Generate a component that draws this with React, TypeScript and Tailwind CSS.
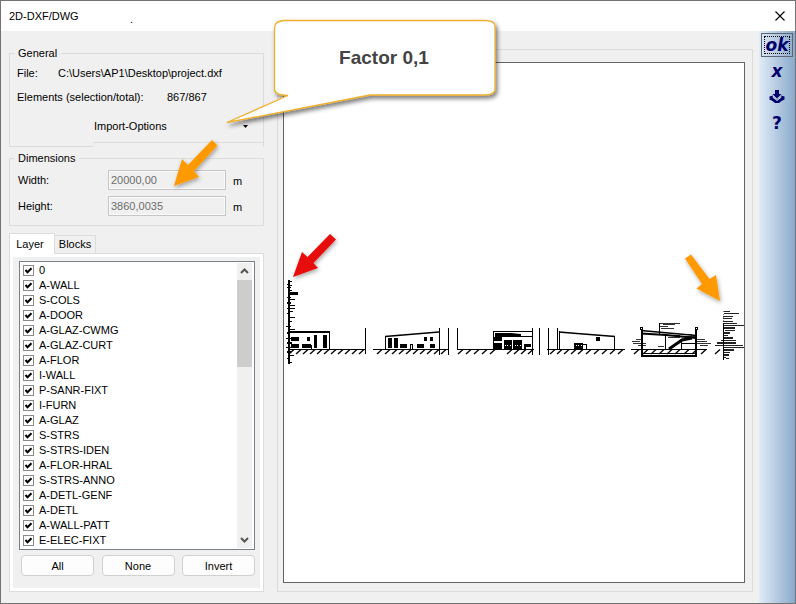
import type { ReactNode } from "react";

const layers = [
  "0",
  "A-WALL",
  "S-COLS",
  "A-DOOR",
  "A-GLAZ-CWMG",
  "A-GLAZ-CURT",
  "A-FLOR",
  "I-WALL",
  "P-SANR-FIXT",
  "I-FURN",
  "A-GLAZ",
  "S-STRS",
  "S-STRS-IDEN",
  "A-FLOR-HRAL",
  "S-STRS-ANNO",
  "A-DETL-GENF",
  "A-DETL",
  "A-WALL-PATT",
  "E-ELEC-FIXT",
];

// x, y, width, height
type Box = [number, number, number, number];

const windows: Box[] = [
  [291, 337, 8, 4], [307, 337, 3, 4], [314, 335, 3, 13], [323, 335, 4, 13], [291, 344, 8, 4], [302, 344, 9, 4],
  [388, 338, 4, 10], [394, 338, 4, 10], [400, 344, 7, 4], [417, 344, 7, 4], [430, 344, 5, 4], [424, 337, 3, 4], [430, 337, 3, 4],
  [494, 337, 8, 4], [494, 343, 8, 6], [504, 340, 8, 9], [513, 340, 9, 9], [524, 344, 7, 3], [524, 347, 2, 2],
  [596, 337, 4, 4], [574, 343, 9, 6], [583, 344, 3, 1],
];

const glints: Box[] = [
  [505, 345, 1, 1], [507, 345, 1, 1], [510, 345, 1, 1], [515, 345, 1, 1], [517, 345, 1, 1], [520, 345, 1, 1],
  [576, 345, 1, 1], [578, 345, 1, 1], [581, 345, 1, 1],
];

const posts: Box[] = [
  [365, 328, 1, 26], [439, 328, 1, 27], [448, 328, 1, 27], [457, 328, 1, 22],
  [532, 328, 1, 27], [539, 328, 1, 27], [548, 328, 1, 27], [557, 328, 1, 22],
];

const leftTicks: Box[] = [
  [289, 281, 3, 1], [287, 284, 2, 1], [290, 285, 2, 1], [287, 287, 4, 1], [289, 290, 3, 1], [288, 292, 10, 3],
  [287, 297, 4, 1], [290, 299, 5, 1], [287, 302, 4, 2], [289, 305, 6, 1], [287, 308, 8, 1], [290, 311, 3, 1],
  [287, 313, 3, 1], [290, 317, 5, 1], [288, 321, 4, 1], [286, 326, 5, 1], [289, 329, 6, 1], [287, 332, 3, 2],
  [286, 338, 5, 1], [287, 342, 5, 2], [286, 347, 5, 1], [287, 351, 4, 2], [290, 355, 4, 1], [287, 358, 3, 1], [290, 362, 2, 1],
];

const rightTicks: Box[] = [
  [724, 311, 6, 1], [724, 313, 15, 1], [723, 316, 10, 1], [723, 318, 9, 1], [723, 321, 10, 1], [723, 323, 14, 1],
  [724, 325, 20, 1], [724, 327, 11, 2], [725, 330, 10, 1], [724, 332, 6, 2], [723, 335, 5, 1], [724, 337, 9, 2],
  [721, 340, 15, 1], [717, 342, 19, 2], [723, 345, 20, 1], [715, 345, 9, 1], [724, 347, 20, 1], [724, 349, 10, 2],
  [723, 352, 7, 1], [724, 354, 5, 2], [723, 357, 3, 1], [726, 358, 3, 1],
];

const notes: Box[] = [
  [659, 323, 21, 1], [659, 326, 9, 1], [661, 328, 13, 1], [663, 324, 12, 1],
  [636, 339, 6, 1], [632, 341, 8, 1], [633, 343, 13, 1], [638, 345, 8, 1],
  [697, 339, 8, 1], [697, 341, 10, 1], [697, 343, 14, 1], [700, 345, 8, 1],
  [667, 335, 13, 1], [668, 337, 12, 1], [658, 346, 6, 1], [684, 334, 8, 1], [686, 336, 9, 1],
];

const hatches = [
  289, 296, 303, 310, 317, 324, 331, 338, 345, 352, 359, 377, 385, 392, 399, 406, 413, 420, 427, 434, 441,
  458, 466, 474, 482, 490, 507, 514, 521, 528, 550, 557, 564, 571, 578, 586, 594, 602, 610, 618,
  634, 643, 651, 659, 667, 675, 684, 692, 701, 715,
];

function Boxes({ items, fill = "#000" }: { items: Box[]; fill?: string }) {
  return (
    <g fill={fill} shapeRendering="crispEdges">
      {items.map(([x, y, width, height]) => (
        <rect key={`${x}-${y}`} x={x} y={y} width={width} height={height} />
      ))}
    </g>
  );
}

function Elevations() {
  return (
    <svg viewBox="284 63 460 519" className="block h-full w-full" role="img" aria-label="Preview">
      <Boxes items={windows} />
      <Boxes items={glints} fill="#fff" />
      <Boxes items={posts} />
      <Boxes items={leftTicks} />
      <Boxes items={rightTicks} fill="#222" />
      <Boxes items={notes} fill="#333" />

      <g fill="none" stroke="#000" shapeRendering="crispEdges">
        <path d="M289 280V364" strokeWidth="2" />
        <path d="M290 349.5H366M373 349.5H449M457 349.5H534M547 349.5H625M631 349.5H707" />
        <path d="M289 332H330" strokeWidth="2" />
        <path d="M329.5 332V349M311.5 345V349M385.5 336V349M410.5 344.5H412.5V349M410.5 344V349" />
        <path d="M493.5 331V349M493 331.5H533M502 336.5H533" />
        <path d="M559.5 331V349M614.5 336V349M586.5 344V349" />
        <path d="M641.5 329V356M723.5 323V360M665.5 335V349M681.5 340V349M681 343.5H696M659.5 323V334" />
        <path d="M696 329V356M642 329V356" strokeWidth="2" />
        <path d="M641 353.5H697" />
        <path d="M641 356H697" strokeWidth="2" />
        <path d="M640.5 327.5h2v2h-2zM695.5 327.5h2v2h-2z" />
        <path d="M723.5 311V323" stroke="#888" strokeDasharray="1 2" />
      </g>
      <g fill="none" stroke="#000">
        <path d="M385 336.5L439 332M559 332L577 333.5L615 336.5" strokeWidth="1.6" />
        <path d="M641 330.500L696 335.500" strokeWidth="1.300" />
        <path d="M641 333.500L666 335L696 338" strokeWidth="2" />
        <path d="M669 349L682 340L692 338" strokeWidth="3" />
        {hatches.map((x) => (
          <path key={x} d={`M${x} 354L${x + 5} 349.5`} strokeWidth="1.3" />
        ))}
      </g>
      <path d="M495 333H511L521 334V336H502V337H495Z" fill="#000" />
    </svg>
  );
}

function Annotations() {
  return (
    <svg
      width="760"
      height="320"
      viewBox="0 0 760 320"
      className="pointer-events-none absolute -left-px -top-px"
      aria-hidden="true"
    >
      <defs>
        <filter id="shadow" x="-10%" y="-20%" width="125%" height="150%">
          <feDropShadow dx="2" dy="3" stdDeviation="2" floodColor="#000" floodOpacity="0.5" />
        </filter>
        <filter id="soft-shadow" x="-10%" y="-20%" width="125%" height="150%">
          <feDropShadow dx="1" dy="2" stdDeviation="2" floodColor="#000" floodOpacity="0.35" />
        </filter>
      </defs>
      <path
        d="M285 20.5H484Q495 20.5 495 26V89Q495 95 484 95H370L227 122.500L288 95.500Q274.500 95 274.500 89V28Q274.500 20.500 285 20.500Z"
        fill="#fff"
        stroke="#efb02e"
        strokeWidth="1.3"
        filter="url(#shadow)"
      />
      <g filter="url(#soft-shadow)">
        <path d="M174 186L182 159L188 165L212 140L217.500 145.500L194 171L199 177Z" fill="#ff9900" />
        <path d="M293 277L302 252L307.500 257L330 234L336 239.500L313.500 263L318 268Z" fill="#e80c0c" />
        <path d="M720 301L696.500 288.500L702 284L685 258.500L691 254.500L709.500 279L716 275Z" fill="#ff9900" />
      </g>
    </svg>
  );
}

function Group({ title, children }: { title: string; children: ReactNode }) {
  return (
    <fieldset className="border border-[#dcdcdc]">
      <legend className="ml-1 px-1 leading-[14px]">{title}</legend>
      {children}
    </fieldset>
  );
}

function Dimension({ id, label, value }: { id: string; label: string; value: string }) {
  return (
    <div className="flex h-[26px] items-center pl-2">
      <label htmlFor={id} className="w-[90px]">
        {label}
      </label>
      <input
        id={id}
        defaultValue={value}
        disabled
        className="h-5 w-[118px] border border-[#c6c6c6] bg-[#f0f0f0] px-[2px] text-[#6d6d6d] shadow-[inset_0_0_0_1px_#fafafa]"
      />
      <span className="ml-[7px] pt-[2px]">m</span>
    </div>
  );
}

function LayerRow({ name }: { name: string }) {
  return (
    <label className="flex h-[15px] items-center gap-[5px] pl-[2px]">
      <span className="grid size-[11px] place-items-center">
        <input
          type="checkbox"
          defaultChecked
          className="col-start-1 row-start-1 size-[11px] appearance-none border border-[#8a8a8a] bg-white"
        />
        <svg viewBox="0 0 9 9" className="pointer-events-none col-start-1 row-start-1 size-[9px]">
          <path d="M1.500 4L3.500 6.300L7.500 2.300" fill="none" stroke="#000" strokeWidth="2" />
        </svg>
      </span>
      {name}
    </label>
  );
}

function Chevron({ d }: { d: string }) {
  return (
    <svg viewBox="0 0 15 17" className="h-[17px] w-[15px]">
      <path d={d} fill="none" stroke="#555" strokeWidth="2" />
    </svg>
  );
}

function SideBar() {
  return (
    <nav className="flex w-9 flex-col items-center gap-[2px] bg-linear-to-r from-[#e0ecf8] via-[#b5cae1] to-[#8aaacb] pt-[2px] font-['DejaVu_Sans',sans-serif] font-bold text-[#00006c]">
      <button type="button" className="h-6 w-8 border border-[#5c6670] p-[2px]">
        <span className="flex h-full items-center justify-center border border-dotted border-black text-[17px] leading-none italic">
          ok
        </span>
      </button>
      <button type="button" className="h-6 w-8 text-[17px] leading-5 italic">
        x
      </button>
      <button type="button" aria-label="Insert" className="flex h-6 w-8 items-center justify-center">
        <svg viewBox="0 0 16 14" className="h-[14px] w-4">
          <path d="M6 0H10V4H12.500L8 8.500L3.500 4H6Z" fill="#00006c" />
          <path
            d="M0.500 6.500L4 5.500V7L8 10L12 7V5.500L15.500 6.500V9.500L12.500 11L10 13H6L3.500 11L0.500 9.500Z"
            fill="#00006c"
          />
          <path d="M3.500 7L8 10.500L12.500 7" fill="none" stroke="#c3d4e7" strokeWidth="1" />
        </svg>
      </button>
      <button type="button" className="h-6 w-8 text-[17px] leading-6">
        ?
      </button>
    </nav>
  );
}

export default function App() {
  return (
    <div className="relative flex min-h-screen flex-col border border-[#737373] bg-[#f0f0f0] font-['Liberation_Sans',Arial,sans-serif] text-[11px] text-black">
      <header className="flex h-[30px] items-center bg-white pl-2">
        <h1 className="w-[121px]">2D-DXF/DWG</h1>
        <span className="pt-[6px]">.</span>
        <button type="button" aria-label="Close" className="mr-[10px] ml-auto">
          <svg viewBox="0 0 10 10" className="size-[10px]">
            <path d="M0.500 0.500L9.500 9.500M9.500 0.500L0.500 9.500" stroke="#000" strokeWidth="1.100" />
          </svg>
        </button>
      </header>

      <div className="flex flex-1">
        <div className="flex w-[263px] shrink-0 flex-col pt-[15px] pb-[11px] pl-2">
          <Group title="General">
            <div className="flex h-6 items-center pt-[2px] pl-[7px]">
              <span className="w-[41px]">File:</span>
              <span>C:\Users\AP1\Desktop\project.dxf</span>
            </div>
            <div className="flex h-6 items-center pt-[2px] pl-[7px]">
              <span className="w-[150px]">Elements (selection/total):</span>
              <span>867/867</span>
            </div>
            <div className="-mb-px ml-[83px] bg-[#f0f0f0] pb-1">
              <button
                type="button"
                className="flex h-[35px] w-full items-center justify-between border-b border-[#dcdcdc] pt-[2px] pr-[15px] pl-px"
              >
                Import-Options
                <svg viewBox="0 0 5 3" className="h-[3px] w-[5px]">
                  <path d="M0 0H5L2.500 3Z" />
                </svg>
              </button>
            </div>
          </Group>

          <div className="mt-1">
            <Group title="Dimensions">
              <div className="pt-[2px] pb-[6px]">
                <Dimension id="width" label="Width:" value="20000,00" />
                <Dimension id="height" label="Height:" value="3860,0035" />
              </div>
            </Group>
          </div>

          <div className="mt-[7px] flex items-end" role="tablist">
            <button
              type="button"
              role="tab"
              aria-selected="true"
              className="relative -mb-px h-[21px] w-[46px] border border-b-0 border-[#dcdcdc] bg-white pr-1"
            >
              Layer
            </button>
            <button
              type="button"
              role="tab"
              aria-selected="false"
              className="h-[18px] w-[41px] border border-b-0 border-l-0 border-[#dcdcdc]"
            >
              Blocks
            </button>
          </div>

          <div className="flex-1 border border-[#dcdcdc]">
            <div className="h-full border-3 border-white pt-1 pr-[5px] pb-3 pl-[6px]">
              <div className="flex border border-[#7a8088] bg-white p-px">
                <div className="flex-1">
                  {layers.map((name) => (
                    <LayerRow key={name} name={name} />
                  ))}
                </div>
                <div className="mr-px flex w-[15px] flex-col bg-[#f0f0f0]">
                  <Chevron d="M4 10L7.500 6.500L11 10" />
                  <div className="h-[87px] bg-[#cdcdcd]" />
                  <div className="mt-auto">
                    <Chevron d="M4 7L7.500 10.500L11 7" />
                  </div>
                </div>
              </div>
              <div className="mt-[5px] flex justify-between pl-[2px]">
                {["All", "None", "Invert"].map((label) => (
                  <button
                    key={label}
                    type="button"
                    className="h-[21px] w-[73px] rounded-[4px] border border-[#d0d0d0] bg-[#fdfdfd] pt-px"
                  >
                    {label}
                  </button>
                ))}
              </div>
            </div>
          </div>
        </div>

        <main className="mt-[18px] mr-[6px] mb-[11px] ml-[13px] flex-1 border border-[#dcdcdc] pt-3 pr-[7px] pb-2 pl-[5px]">
          <div className="h-full border border-[#646464] bg-white">
            <Elevations />
          </div>
        </main>

        <SideBar />
      </div>

      <Annotations />
      <div className="absolute top-5 left-[273px] flex h-[75px] w-[220px] items-center justify-center text-[19px] font-bold text-[#444]">
        Factor 0,1
      </div>
    </div>
  );
}
